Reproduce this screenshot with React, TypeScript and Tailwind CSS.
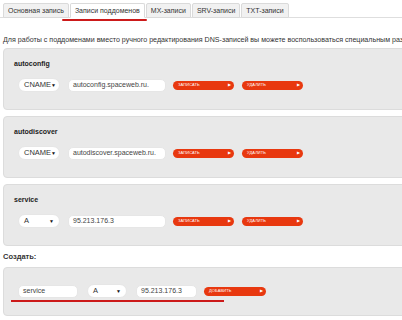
import React from "react";

const Btn = ({ label, w }: { label: string; w: string }) => (
  <div className={`${w} h-[9px] rounded-full bg-[#e8380f] flex items-center justify-between pl-[5px] pr-[3px] shrink-0`}>
    <span className="text-[4px] leading-[4px] text-white tracking-[0.1px]">{label}</span>
    <span className="text-[4px] leading-[4px] text-white">▶</span>
  </div>
);

const Select = ({ value, w }: { value: string; w: string }) => (
  <div className={`${w} h-[14px] rounded-full bg-white border border-[#e6e6e6] flex items-center justify-between pl-[5px] pr-[5px] shrink-0`}>
    <span className="text-[7.5px] leading-[8px] text-[#333]">{value}</span>
    <span className="text-[5px] leading-[5px] text-[#111]">▼</span>
  </div>
);

const Input = ({ value, w }: { value: string; w: string }) => (
  <div className={`${w} h-[13px] rounded-[5px] bg-white border border-[#e6e6e6] flex items-center pl-[4px] shrink-0`}>
    <span className="text-[7px] leading-[8px] text-[#444] whitespace-nowrap">{value}</span>
  </div>
);

const Panel = ({ name, type, value }: { name: string; type: string; value: string }) => (
  <div className="ml-[3px] w-[420px] rounded-[4px] bg-[#e9e9e9] border border-[#dcdcdc] pt-[10px] pl-[10px] pb-[17px]">
    <div className="text-[7px] leading-[10px] h-[10px] font-bold text-[#222]">{name}</div>
    <div className="mt-[9px] pl-[4px] flex items-center h-[14px]">
      <Select value={type} w="w-[42px]" />
      <div className="ml-[8px]">
        <Input value={value} w="w-[98px]" />
      </div>
      <div className="ml-[7px]">
        <Btn label="ЗАПИСАТЬ" w="w-[61px]" />
      </div>
      <div className="ml-[8px]">
        <Btn label="УДАЛИТЬ" w="w-[61px]" />
      </div>
    </div>
  </div>
);

export default function App() {
  const tabs = ["Основная запись", "Записи поддоменов", "MX-записи", "SRV-записи", "TXT-записи"];
  return (
    <div
      className="relative w-[402px] h-[320px] overflow-hidden bg-white text-[#333]"
      style={{ fontFamily: '"Liberation Sans", Arial, sans-serif' }}
    >
      <div className="pt-[3px] pl-[3px] flex border-b border-[#dedede] h-[18px]">
        {tabs.map((t, i) => (
          <div
            key={t}
            className={`h-[15px] px-[4px] mr-[1px] border border-[#dadada] rounded-t-[2px] text-[7px] leading-[13px] whitespace-nowrap ${
              i === 1 ? "bg-white border-b-white" : "bg-[#f1f1f1]"
            }`}
          >
            {t}
          </div>
        ))}
      </div>
      <div className="absolute left-[62px] top-[19px] w-[85px] h-[2px] bg-[#cc1a1a] rounded-full" />

      <div className="mt-[17px] pl-[3px] text-[7.1px] leading-[10px] whitespace-nowrap overflow-hidden text-[#333]">
        Для работы с поддоменами вместо ручного редактирования DNS-записей вы можете воспользоваться специальным разделом.
      </div>

      <div className="mt-[3px] flex flex-col gap-[6px]">
        <Panel name="autoconfig" type="CNAME" value="autoconfig.spaceweb.ru." />
        <Panel name="autodiscover" type="CNAME" value="autodiscover.spaceweb.ru." />
        <Panel name="service" type="A" value="95.213.176.3" />
      </div>

      <div className="mt-[6px] pl-[3px] text-[7.5px] leading-[10px] font-bold text-[#333]">Создать:</div>

      <div className="relative mt-[5px] ml-[3px] w-[420px] h-[49px] rounded-[4px] bg-[#e9e9e9] border border-[#dcdcdc] pt-[16px] pl-[14px]">
        <div className="flex items-center h-[14px]">
          <Input value="service" w="w-[60px]" />
          <div className="ml-[9px]">
            <Select value="A" w="w-[40px]" />
          </div>
          <div className="ml-[9px]">
            <Input value="95.213.176.3" w="w-[61px]" />
          </div>
          <div className="ml-[7px]">
            <Btn label="ДОБАВИТЬ" w="w-[62px]" />
          </div>
        </div>
        <div className="absolute left-[7px] top-[32px] w-[213px] h-[1.5px] bg-[#cc1a1a]" />
      </div>
    </div>
  );
}
